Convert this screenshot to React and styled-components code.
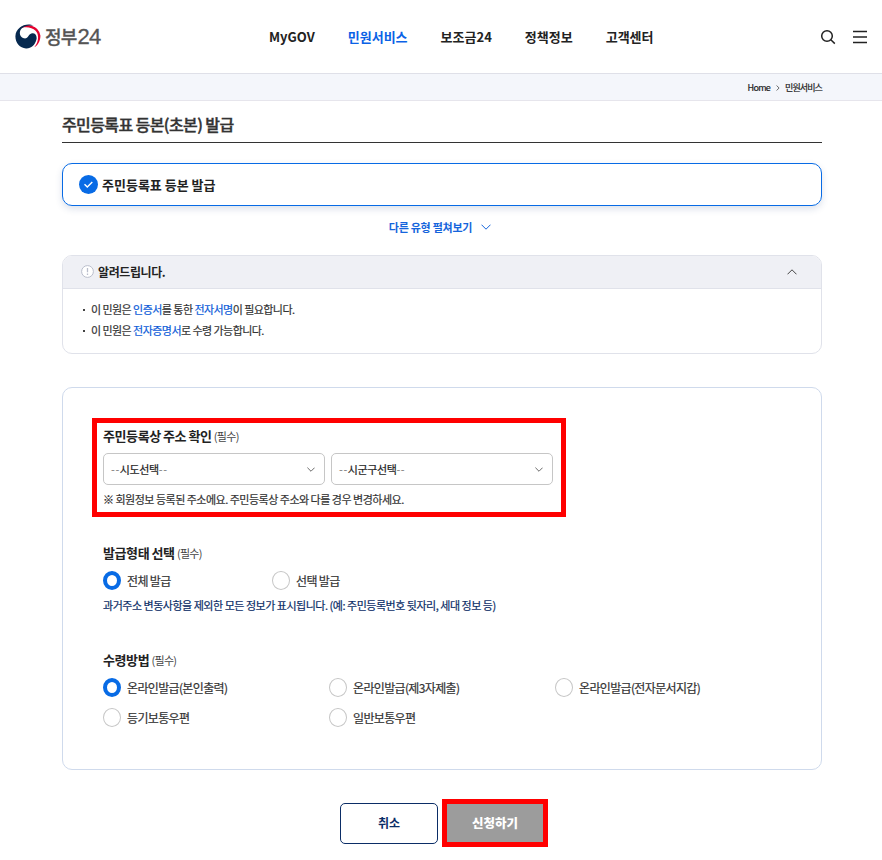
import * as React from 'react';
import styled, { createGlobalStyle } from 'styled-components';

const GlobalStyle = createGlobalStyle`
  * {
    box-sizing: border-box;
  }

  body {
    margin: 0;
    background: #fff;
    color: #222;
    font-family: 'Noto Sans CJK KR', sans-serif;
    font-size: 11px;
  }

  h1, h2, p, ul {
    margin: 0;
    padding: 0;
  }
`;

const menu = ['MyGOV', '민원서비스', '보조금24', '정책정보', '고객센터'];

const methods = [
  '온라인발급(본인출력)',
  '온라인발급(제3자제출)',
  '온라인발급(전자문서지갑)',
  '등기보통우편',
  '일반보통우편'
];

const Chevron = ({ up, size = 10, color = '#444' }) => (
  <svg width={size} height={size / 2 + 1} viewBox="0 0 10 6" fill="none" stroke={color}>
    <path d={up ? 'M.5 5.3 5 .8l4.5 4.5' : 'M.5.7 5 5.2 9.5.7'} />
  </svg>
);

const Emblem = () => (
  <svg width="26" height="25" viewBox="0 0 26 25">
    <path d="M4 5.2A12.4 12.4 0 0 1 25.4 11.5C25.6 16.5 23 21.4 19.3 23.3 23.4 18.5 24.6 11 20.6 6.8 16.8 3 9 2.2 4 5.2Z" fill="#e4002f" />
    <path
      d="M4.9 3.6C8.5.3 14.5-.7 18.7 1.7 12.5.6 7.3 2.8 5.4 6.2 4 9.5 5.2 13.5 8.8 14.3 13.3 15.3 13.3 9.9 17 9.3 20.3 8.9 22.2 11.8 21.5 15.3 20.2 21.2 15.8 24.7 11 24.4 4.8 24 .3 18.8.4 12.2.5 8.7 2.2 5.6 4.9 3.6Z"
      fill="#06294f"
    />
  </svg>
);

const Field = ({ label, children, gap }) => (
  <Group $gap={gap}>
    <Legend>
      {label} <small>(필수)</small>
    </Legend>
    {children}
  </Group>
);

const Placeholder = ({ children }) => (
  <span>
    <Dash>--</Dash>
    {children}
    <Dash>--</Dash>
  </span>
);

const App = () => (
  <>
    <GlobalStyle />
    <Header>
      <Logo>
        <Emblem />
        <LogoText>
          정부<span>24</span>
        </LogoText>
      </Logo>
      <Nav>
        {menu.map((item, i) => (
          <NavItem key={item} $active={i === 1}>
            {item}
          </NavItem>
        ))}
      </Nav>
      <Tools>
        <svg width="16" height="16" viewBox="0 0 16 16" fill="none" stroke="#222" strokeWidth="1.5">
          <circle cx="7" cy="7" r="5.3" />
          <path d="m10.8 10.8 4 3.8" />
        </svg>
        <svg width="14" height="14" viewBox="0 0 14 14" stroke="#222" strokeWidth="1.3">
          <path d="M0 1.5h14M0 7h14M0 12.5h14" />
        </svg>
      </Tools>
    </Header>
    <Breadcrumb>
      <span>Home</span>
      <svg width="4" height="6" viewBox="0 0 4 6" fill="none" stroke="#444" strokeWidth=".8">
        <path d="m.6.5 2.5 2.5L.6 5.5" />
      </svg>
      <Current>민원서비스</Current>
    </Breadcrumb>

    <Main>
      <Title>주민등록표 등본(초본) 발급</Title>
      <Option>
        <svg width="19" height="19" viewBox="0 0 19 19" fill="none">
          <circle cx="9.5" cy="9.5" r="9.5" fill="#086be5" />
          <path d="m5.5 9.3 2.8 2.8 5-5" stroke="#fff" strokeWidth="1.4" />
        </svg>
        <span>주민등록표 등본 발급</span>
      </Option>
      <More>
        다른 유형 펼쳐보기
        <Chevron color="#1565dc" />
      </More>

      <Notice>
        <NoticeHead>
          <svg width="13" height="13" viewBox="0 0 13 13" fill="none" stroke="#b9bdcb">
            <circle cx="6.5" cy="6.5" r="5.9" fill="#fff" />
            <path d="M6.5 3v4.3M6.5 8.6v1.3" strokeWidth="1.3" />
          </svg>
          <h2>알려드립니다.</h2>
          <Chevron up />
        </NoticeHead>
        <NoticeList>
          <li>
            이 민원은 <em>인증서</em>를 통한 <em>전자서명</em>이 필요합니다.
          </li>
          <li>
            이 민원은 <em>전자증명서</em>로 수령 가능합니다.
          </li>
        </NoticeList>
      </Notice>

      <Form>
        <Field label="주민등록상 주소 확인" gap={37}>
          <Selects>
            <Select>
              <Placeholder>시도선택</Placeholder>
              <Chevron size={8} />
            </Select>
            <Select>
              <Placeholder>시군구선택</Placeholder>
              <Chevron size={8} />
            </Select>
          </Selects>
          <Help>※ 회원정보 등록된 주소에요. 주민등록상 주소와 다를 경우 변경하세요.</Help>
          <Highlight $top={-10} $left={-11} $width={474} $height={99} />
        </Field>

        <Field label="발급형태 선택" gap={37}>
          <Radios $column={169}>
            <Radio>
              <Dot $checked />
              전체 발급
            </Radio>
            <Radio>
              <Dot />
              선택 발급
            </Radio>
          </Radios>
          <Help $navy>
            과거주소 변동사항을 제외한 모든 정보가 표시됩니다. (예: 주민등록번호 뒷자리, 세대 정보 등)
          </Help>
        </Field>

        <Field label="수령방법" gap={0}>
          <Radios $column={226}>
            {methods.map((method, i) => (
              <Radio key={method}>
                <Dot $checked={i === 0} />
                {method}
              </Radio>
            ))}
          </Radios>
        </Field>
      </Form>

      <Actions>
        <Button>취소</Button>
        <Submit>
          <Button $disabled>신청하기</Button>
          <Highlight $top={-4} $left={-3} $width={106} $height={48} />
        </Submit>
      </Actions>
    </Main>
  </>
);

const Header = styled.header`
  display: grid;
  grid-template-columns: 269px 1fr auto;
  align-items: center;
  height: 74px;
  padding: 0 15px;
  border-bottom: 1px solid #dfe0e8;
`;

const Logo = styled.div`
  display: flex;
  align-items: center;
  gap: 4px;
`;

const LogoText = styled.strong`
  display: flex;
  align-items: center;
  height: 25px;
  padding-bottom: 1px;
  color: #555;
  font-size: 18px;
  font-weight: 500;
  letter-spacing: -0.8px;
  -webkit-text-stroke: 0.3px #555;

  span {
    margin: 2px 0 0 1px;
    font-family: 'Liberation Sans', sans-serif;
    font-size: 22px;
    font-weight: 400;
  }
`;

const Nav = styled.nav`
  display: flex;
  gap: 33px;
  margin-left: -15px;
`;

const NavItem = styled.a`
  color: ${props => (props.$active ? '#0b62e6' : '#222')};
  font-size: 13px;
  font-weight: 700;
  line-height: 20px;
`;

const Tools = styled.div`
  display: flex;
  align-items: center;
  gap: 17px;
`;

const Breadcrumb = styled.div`
  display: flex;
  align-items: center;
  justify-content: flex-end;
  gap: 5px;
  height: 27px;
  padding: 1px 60px 0 0;
  background: #f4f6fb;
  border-bottom: 1px solid #e6e5ec;
  font-size: 9px;
  letter-spacing: -0.7px;
  -webkit-text-stroke: 0.2px;

  svg {
    margin-left: 1px;
  }
`;

const Current = styled.span`
  letter-spacing: -0.9px;
`;

const Main = styled.main`
  width: 760px;
  min-height: 759px;
  margin-left: 62px;
`;

const Title = styled.h1`
  height: 42px;
  padding-top: 11px;
  border-bottom: 1px solid #333;
  color: #333;
  font-size: 16px;
  font-weight: 500;
  line-height: 24px;
  letter-spacing: -0.6px;
  -webkit-text-stroke: 0.4px;
`;

const Option = styled.div`
  display: flex;
  align-items: center;
  gap: 4px;
  height: 43px;
  margin-top: 20px;
  padding-left: 16px;
  border: 1px solid #086be5;
  border-radius: 10px;
  box-shadow: 0 3px 7px rgba(40, 70, 130, 0.16);
  font-size: 13px;
  font-weight: 700;

  span {
    padding-bottom: 1px;
  }
`;

const More = styled.div`
  display: flex;
  align-items: center;
  justify-content: center;
  gap: 9px;
  height: 49px;
  padding: 0 4px 7px 0;
  color: #1565dc;
  font-weight: 700;
  letter-spacing: -0.25px;
`;

const Notice = styled.section`
  height: 99px;
  border: 1px solid #e0e2ea;
  border-radius: 10px;
  overflow: hidden;
`;

const NoticeHead = styled.div`
  display: flex;
  align-items: center;
  gap: 4px;
  height: 33px;
  padding: 0 24px 1px 18px;
  background: #eff0f5;
  border-bottom: 1px solid #e0e2ea;

  h2 {
    flex: 1;
    font-size: 12px;
    font-weight: 700;
    letter-spacing: -0.4px;
  }
`;

const NoticeList = styled.ul`
  padding: 10px 20px;
  list-style: none;

  li {
    color: #333;
    line-height: 21px;
    letter-spacing: -0.55px;
    -webkit-text-stroke: 0.2px;
  }

  li::before {
    content: '';
    display: inline-block;
    width: 2px;
    height: 2px;
    margin-right: 6px;
    vertical-align: 3px;
    background: #444;
  }

  em {
    color: #0b5bd8;
    font-style: normal;
  }
`;

const Form = styled.form`
  height: 383px;
  margin-top: 33px;
  padding: 40px;
  border: 1px solid #cfdaec;
  border-radius: 10px;
`;

const Group = styled.div`
  position: relative;
  margin-bottom: ${props => props.$gap}px;
`;

const Legend = styled.div`
  height: 17px;
  font-size: 13px;
  font-weight: 700;
  line-height: 16px;
  letter-spacing: -0.4px;
  word-spacing: -0.3px;

  small {
    color: #444;
    font-size: 11px;
    font-weight: 400;
    letter-spacing: -0.7px;
  }
`;

const Selects = styled.div`
  display: flex;
  gap: 6px;
  margin-top: 8px;
`;

const Select = styled.div`
  display: flex;
  align-items: center;
  justify-content: space-between;
  width: 222px;
  height: 32px;
  padding: 0 9px 0 7px;
  border: 1px solid #c6c6c6;
  border-radius: 5px;
  letter-spacing: -0.4px;
  -webkit-text-stroke: 0.2px;
`;

const Dash = styled.span`
  color: #777;
  letter-spacing: 0.6px;
  -webkit-text-stroke: 0;
`;

const Help = styled.p`
  height: 18px;
  margin-top: ${props => (props.$navy ? 7 : 5)}px;
  color: ${props => (props.$navy ? '#0b2d66' : '#333')};
  line-height: ${props => (props.$navy ? 17 : 18)}px;
  letter-spacing: ${props => (props.$navy ? '-0.48px' : '-0.5px')};
  white-space: nowrap;
  -webkit-text-stroke: 0.2px;
`;

// red frame drawn over the part the reader has to fill in
const Highlight = styled.span`
  position: absolute;
  top: ${props => props.$top}px;
  left: ${props => props.$left}px;
  width: ${props => props.$width}px;
  height: ${props => props.$height}px;
  border: 5px solid #f00;
  pointer-events: none;
`;

const Radios = styled.div`
  display: grid;
  grid-template-columns: repeat(auto-fill, ${props => props.$column}px);
  row-gap: 11px;
  margin-top: 9px;
`;

const Radio = styled.label`
  display: flex;
  align-items: center;
  gap: 6px;
  height: 19px;
  color: #333;
  font-size: 12px;
  letter-spacing: -0.65px;
  white-space: nowrap;
  -webkit-text-stroke: 0.2px;
`;

const Dot = styled.span`
  width: 18px;
  height: 19px;
  border: ${props => (props.$checked ? '4px solid #086be5' : '1px solid #c6c6c6')};
  border-radius: 50%;
`;

const Actions = styled.div`
  display: flex;
  gap: 7px;
  margin: 33px 0 0 278px;
`;

const Submit = styled.div`
  position: relative;
`;

const Button = styled.button`
  width: ${props => (props.$disabled ? 100 : 98)}px;
  height: 41px;
  padding: 0 0 3px;
  border: 1px solid ${props => (props.$disabled ? '#9c9c9c' : '#0b2d66')};
  border-radius: 5px;
  background: ${props => (props.$disabled ? '#9c9c9c' : '#fff')};
  color: ${props => (props.$disabled ? '#fff' : '#0b2d66')};
  font-family: inherit;
  font-size: ${props => (props.$disabled ? 12.5 : 12)}px;
  font-weight: ${props => (props.$disabled ? 900 : 700)};
`;

export default App;
